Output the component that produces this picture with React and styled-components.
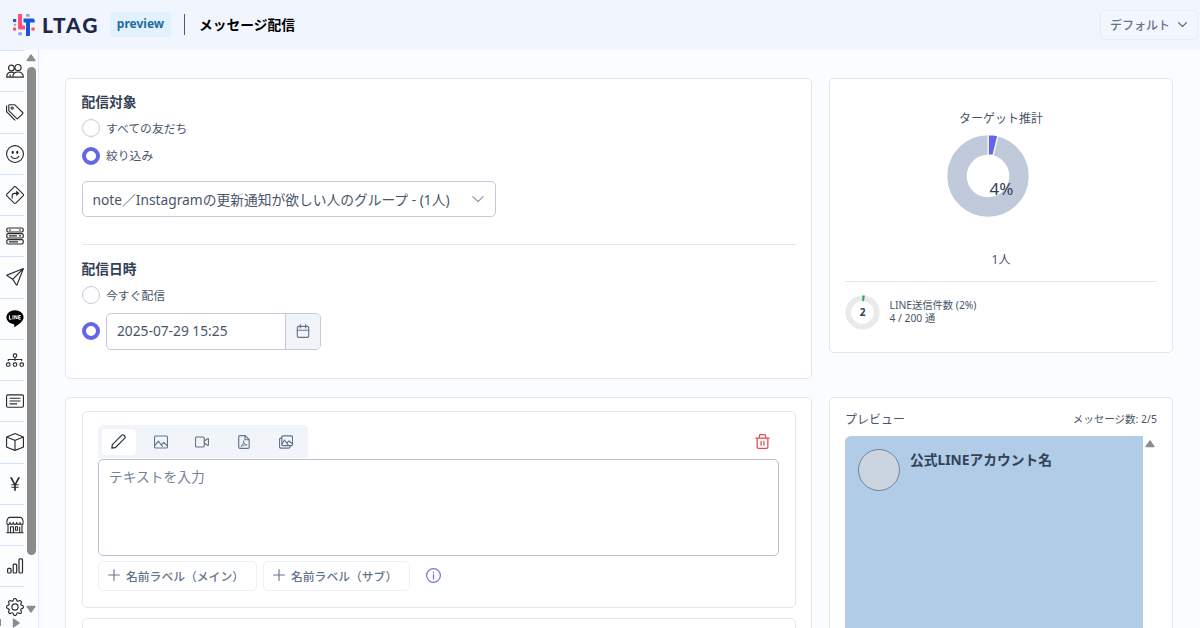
import React, { useState } from 'react'
import styled, { createGlobalStyle } from 'styled-components'
import {
    BsTags, BsEmojiSmile, BsSignTurnRight, BsSend,
    BsDiagram3, BsCardText, BsBox, BsCurrencyYen, BsGear,
} from 'react-icons/bs'

const GlobalStyle = createGlobalStyle`
    *{
        box-sizing:border-box;
    }
    body{
        margin:0;
        overflow:hidden;
        background:#fbfcff;
        color:#334155;
        font-family:"Noto Sans", "Noto Sans CJK JP", sans-serif;
        font-size:12px;
    }
    button, textarea, input{
        font-family:inherit;
        color:inherit;
    }
    svg{
        display:block;
        flex-shrink:0;
    }
`

/* ---------- icons ---------- */

const Stroke = ({ size = 14, children, width = 1.15 }) => (
    <svg width={size} height={size} viewBox="0 0 14 14" fill="none" stroke="currentColor"
        strokeWidth={width} strokeLinecap="round" strokeLinejoin="round">{children}</svg>
)

const PeopleIcon = () => (
    <svg width="18" height="18" viewBox="0 0 18 18" fill="none" stroke="currentColor" strokeWidth="1.2" strokeLinejoin="round">
        <circle cx="5.4" cy="6" r="2.9" />
        <circle cx="12" cy="5.6" r="3.1" />
        <path d="M6.800 15.200c0-3.500 2.200-5.200 5.300-5.200s5.200 1.700 5.200 5.200zM6.800 15.200H.7c0-3.400 1.900-5 4.700-5q1.700 0 2.800.7M4.200 15v-2.600" />
    </svg>
)

const ServerIcon = () => (
    <svg width="18" height="18" viewBox="0 0 18 18" fill="none" stroke="currentColor" strokeWidth="1.2">
        <rect x="0.8" y="1" width="16.4" height="4" rx="1.4" />
        <rect x="0.8" y="6.6" width="16.4" height="4.4" rx="1.2" />
        <rect x="0.8" y="12.6" width="16.4" height="4.4" rx="1.4" />
        <path d="M3 3h2M13 3h2M3 8.8h8M13 8.8h2M3 14.8h9" />
    </svg>
)

const ShopIcon = () => (
    <svg width="18" height="18" viewBox="0 0 18 18" fill="none" stroke="currentColor" strokeWidth="1.1" strokeLinejoin="round">
        <path d="M.8 6.400C1 4 2.200 1.400 4 1.400h10c1.800 0 3 2.600 3.200 5" />
        <path d="M.7 6.400c0 2.600 3.300 2.600 3.300 0 0 2.600 3.300 2.600 3.300 0 0 2.600 3.400 2.600 3.400 0 0 2.600 3.300 2.600 3.300 0 0 2.600 3.300 2.600 3.300 0" />
        <path d="M2 8.500v8M16 8.500v8M.4 16.700h17.200M4.500 16.500v-5.700h2.900v5.700M9.400 10.800h2.100v3.400H9.400zM13.700 16.500v-5.700" />
    </svg>
)

const BarsIcon = () => (
    <svg width="18" height="18" viewBox="0 0 18 18" fill="none" stroke="currentColor" strokeWidth="1.2">
        <rect x="1.6" y="11.4" width="3.4" height="4.6" rx=".9" />
        <rect x="7.2" y="7.2" width="3.5" height="8.8" rx=".9" />
        <rect x="13" y="1.8" width="3.5" height="14.2" rx=".9" />
    </svg>
)

const LineIcon = () => (
    <svg width="18" height="18" viewBox="0 0 18 18">
        <path fill="#000" d="M9 .3C4.300.3.4 3.400.4 7.300c0 3.500 3.100 6.400 7.300 6.900.9.200.7.800.5 2.400 0 .5.3.5.9.2 1.400-.8 8.500-5 8.500-9.500C17.600 3.400 13.700.3 9 .3z" />
        <path d="M3.400 5.400v3.800h2.100M7 5.200v4.200M8.800 9.300V5.400l2.200 3.600V5.200M14.700 5.500h-2v3.700h2M12.700 7.300h1.800" fill="none" stroke="#fff" strokeWidth="1" />
    </svg>
)

const PencilIcon = () => (
    <Stroke size={15} width={1.200}><path d="M.8 13.200l.5-3.300L9.900 1.300a1.600 1.600 0 0 1 2.300 0l.5.500a1.600 1.600 0 0 1 0 2.300L4.200 12.600z" /></Stroke>
)

const ImageIcon = () => (
    <Stroke>
        <rect x=".5" y="1" width="13" height="12" rx="1.300" />
        <path d="M.8 10.600l3.500-4.400 4.200 5.300M7.200 9.800l2.600-2.300 3.500 3.400" />
    </Stroke>
)

const VideoIcon = () => (
    <Stroke>
        <rect x=".5" y="2" width="8.800" height="10" rx="1.200" />
        <path d="M9.300 6l3.300-2.300q.9-.4.900.5v5.600q0 .9-.9.500L9.300 8" />
    </Stroke>
)

const PdfIcon = () => (
    <Stroke>
        <path d="M3 .6h5.200l4 4v7.500a1.300 1.300 0 0 1-1.300 1.300H3a1.300 1.300 0 0 1-1.300-1.300V1.900A1.300 1.300 0 0 1 3 .6zM8 .8v3.900h4" />
        <path d="M4 11.300c2-1 3-3.800 2.600-5.500M6.600 6.800c.3 1.800 1.700 3 3.500 3.100-2 0-3.800.3-5.500 1.100" strokeWidth=".9" />
    </Stroke>
)

const ImagesIcon = () => (
    <Stroke>
        <rect x="2.800" y=".8" width="10.700" height="9.800" rx="1.200" />
        <path d="M2.800 2.800l-1.500.6q-.8.200-.8 1v7q0 1.700 1.700 1.700h7.600q1.400 0 1.600-2.300M3 9l2.500-4 3.500 4.800M8 7.800l2-1.800 3.300 2.800" />
    </Stroke>
)

const TrashIcon = () => (
    <Stroke size={15} width={1.150}>
        <path d="M.8 3.800h12.400M2 3.800v8.300a1.300 1.300 0 0 0 1.300 1.300h7.400a1.300 1.300 0 0 0 1.300-1.300V3.800M4 3.600V1.900A1.300 1.300 0 0 1 5.300.6h3.400A1.300 1.300 0 0 1 10 1.900v1.700M5.700 6.800v3.700M8.300 6.800v3.700" />
    </Stroke>
)

const CalendarIcon = () => (
    <Stroke>
        <rect x="1.300" y="2.300" width="11.400" height="11" rx="1.300" />
        <path d="M1.300 6.200h11.400M4.300.6v3.300M9.700.6v3.300" />
    </Stroke>
)

const PlusIcon = () => (
    <Stroke size={12} width={1.300}><path d="M7 .7v12.600M.7 7h12.600" /></Stroke>
)

const InfoIcon = () => (
    <Stroke size={15}><circle cx="7" cy="7" r="6.400" /><path d="M7 6.300v3.900M7 3.900v.3" strokeWidth="1.200" /></Stroke>
)

const ChevronIcon = ({ size = 12, width = 1.400 }) => (
    <Stroke size={size} width={width}><path d="M1 4.200l6 5.800 6-5.800" /></Stroke>
)

const LogoMark = () => (
    <svg width="22" height="24" viewBox="0 0 22 24">
        <g fill="#ff4f78">
            <path d="M5 1h4v11.600h3V16.500H6.500Q5 16.500 5 15z" />
            <rect x="0" y="14.500" width="3.200" height="3" rx=".6" />
            <rect x="18.400" y="14.500" width="3.300" height="3" rx=".6" />
        </g>
        <g fill="#1457d9">
            <path d="M10.500 5.500h9.500q1.700 0 1.700 1.700V9.500H17V22q0 1-1 1h-3V9.500h-2.500z" />
            <rect x="0" y="6" width="3.200" height="3" rx=".6" />
        </g>
        <g fill="#93a5cf">
            <rect x="13" y="1" width="3.600" height="2.800" rx=".6" />
            <rect x=".8" y="10.800" width="2.400" height="2" rx=".5" />
            <rect x="5.400" y="19.200" width="3.600" height="3" rx=".6" />
        </g>
    </svg>
)

const Arrow = ({ dir, color = '#8c8c8c' }) => (
    <ArrowSvg $dir={dir} width="10" height="8" viewBox="0 0 10 8">
        <path d="M5 .8L9 6.600H1z" fill={color} stroke={color} strokeWidth="1.200" strokeLinejoin="round" />
    </ArrowSvg>
)

const menuItems = [
    PeopleIcon, BsTags, BsEmojiSmile, BsSignTurnRight, ServerIcon, BsSend, LineIcon,
    BsDiagram3, BsCardText, BsBox, BsCurrencyYen, ShopIcon, BarsIcon, BsGear,
]

const tabs = [PencilIcon, ImageIcon, VideoIcon, PdfIcon, ImagesIcon]

function Header() {
    return (
        <HeaderBar>
            <LogoMark />
            <LogoText>LTAG</LogoText>
            <Tag>preview</Tag>
            <HeaderLine />
            <PageTitle>メッセージ配信</PageTitle>
            <AccountSelect>
                <span>デフォルト</span>
                <ChevronIcon size={9} width={2} />
            </AccountSelect>
        </HeaderBar>
    )
}

function Sidebar() {
    return (
        <SideWrap>
            <SideTop>
                <SideMenu>
                    {menuItems.map((Icon, index) => (
                        <SideItem key={index}><Icon size={18} /></SideItem>
                    ))}
                </SideMenu>
                <SideScroll>
                    <Arrow />
                    <Thumb />
                    <Arrow dir="down" />
                </SideScroll>
            </SideTop>
            <SideBottom>
                <HThumb />
                <Arrow dir="right" />
            </SideBottom>
        </SideWrap>
    )
}

function TargetCard() {
    const [target, setTarget] = useState('filter')
    const [timing, setTiming] = useState('date')
    return (
        <SettingCard>
            <Heading>配信対象</Heading>
            <RadioRow $top={7} onClick={() => setTarget('all')}>
                <Radio $on={target === 'all'} /><RadioText>すべての友だち</RadioText>
            </RadioRow>
            <RadioRow $top={9.5} onClick={() => setTarget('filter')}>
                <Radio $on={target === 'filter'} /><RadioText>絞り込み</RadioText>
            </RadioRow>
            <GroupSelect>
                <span>note／Instagramの更新通知が欲しい人のグループ - (1人)</span>
                <ChevronIcon />
            </GroupSelect>
            <Divider $top={27} $bottom={14} />
            <Heading>配信日時</Heading>
            <RadioRow $top={7} onClick={() => setTiming('now')}>
                <Radio $on={timing === 'now'} /><RadioText>今すぐ配信</RadioText>
            </RadioRow>
            <DateRow onClick={() => setTiming('date')}>
                <Radio $on={timing === 'date'} />
                <DateField>
                    <DateValue>2025-07-29 15:25</DateValue>
                    <DateButton><CalendarIcon /></DateButton>
                </DateField>
            </DateRow>
        </SettingCard>
    )
}

function EstimateCard() {
    return (
        <Estimate>
            <EstimateTitle>ターゲット推計</EstimateTitle>
            <svg width="112" height="84" viewBox="-56 -42 112 84">
                <circle r="31" fill="none" stroke="#c0cada" strokeWidth="19.500" />
                <path d="M.2 -41.500A41.500 41.500 0 0 1 9.900 -40.300L5.100 -20.500A21.200 21.200 0 0 0 .2 -21z"
                    fill="#6366e8" stroke="#fff" strokeWidth="1.300" />
                <text x="1.500" y="19" fontSize="17" fill="#334155">4%</text>
            </svg>
            <People>1人</People>
            <Divider $top={12} $bottom={13} />
            <Usage>
                <svg width="35" height="35" viewBox="-17.500 -17.500 35 35">
                    <circle r="14.250" fill="none" stroke="#e9eaec" strokeWidth="5.700" />
                    <path d="M-.2 -14.250A14.250 14.250 0 0 1 1.900 -14.100" fill="none" stroke="#2fa558" strokeWidth="5.700" />
                    <text y="3.600" fontSize="10" fontWeight="700" textAnchor="middle" fill="#334155">2</text>
                </svg>
                <UsageText>
                    <div>LINE送信件数 (2%)</div>
                    <div>4 / 200 通</div>
                </UsageText>
            </Usage>
        </Estimate>
    )
}

function MessageCard() {
    const [active, setActive] = useState(0)
    return (
        <MessageList>
            <Panel>
                <ToolRow>
                    <Tabs>
                        {tabs.map((Icon, index) => (
                            <Tab key={index} $active={index === active} onClick={() => setActive(index)}><Icon /></Tab>
                        ))}
                    </Tabs>
                    <DeleteButton><TrashIcon /></DeleteButton>
                </ToolRow>
                <TextInput placeholder="テキストを入力" />
                <LabelRow>
                    <LabelButton $width={159}><PlusIcon />名前ラベル（メイン）</LabelButton>
                    <LabelButton $width={147}><PlusIcon />名前ラベル（サブ）</LabelButton>
                    <Info><InfoIcon /></Info>
                </LabelRow>
            </Panel>
            <Panel />
        </MessageList>
    )
}

function Preview() {
    return (
        <PreviewCard>
            <PreviewHead>
                <span>プレビュー</span>
                <Count>メッセージ数: 2/5</Count>
            </PreviewHead>
            <PreviewBody>
                <Talk>
                    <Avatar />
                    <AccountName>公式LINEアカウント名</AccountName>
                </Talk>
                <TalkScroll><Arrow /></TalkScroll>
            </PreviewBody>
        </PreviewCard>
    )
}

export default function App() {
    return (
        <Page>
            <GlobalStyle />
            <Header />
            <Body>
                <Sidebar />
                <Content>
                    <TargetCard />
                    <EstimateCard />
                    <MessageCard />
                    <Preview />
                </Content>
            </Body>
        </Page>
    )
}

const Page = styled.div`
    height:628px;
    width:1200px;
    overflow:hidden;
    display:flex;
    flex-direction:column;
`

const HeaderBar = styled.header`
    height:50px;
    flex-shrink:0;
    display:flex;
    align-items:center;
    padding:0 2px 1px 13px;
    background:#f1f6fe;
`
const LogoText = styled.div`
    width:58px;
    margin-left:7px;
    font-family:Lato, sans-serif;
    font-size:21px;
    font-weight:900;
    line-height:24px;
    letter-spacing:1.9px;
    color:#23264a;
`
const Tag = styled.div`
    width:61px;
    height:25px;
    margin-left:10px;
    border-radius:4px;
    background:#e2f1fe;
    color:#1d6d9e;
    font-weight:700;
    line-height:24px;
    text-align:center;
`
const HeaderLine = styled.div`
    width:1px;
    height:21px;
    margin:0 14px 0 13px;
    background:#555b63;
`
const PageTitle = styled.h1`
    margin:0;
    font-size:13.75px;
    font-weight:700;
    line-height:20px;
    color:#000;
`
const AccountSelect = styled.button`
    width:98px;
    height:30px;
    margin-left:auto;
    padding:0 10px 0 9px;
    display:flex;
    align-items:center;
    justify-content:space-between;
    border:1px solid #e6edf5;
    border-radius:5px;
    background:#f3f7fd;
    color:#64748b;
    font-size:12px;
    font-weight:500;
`

const Body = styled.div`
    flex:1;
    min-height:0;
    display:flex;
`
const SideWrap = styled.nav`
    width:39px;
    flex-shrink:0;
    display:flex;
    flex-direction:column;
    border-right:1px solid #dbeafe;
    background:#fcfdff;
`
const SideTop = styled.div`
    height:567px;
    display:flex;
`
const SideMenu = styled.div`
    width:24px;
    overflow:hidden;
`
const SideItem = styled.div`
    height:41.250px;
    padding:0 0 0 6px;
    display:flex;
    align-items:center;
    border-top:1px solid #d3e2fb;
    color:#2b2b2b;
`
const SideScroll = styled.div`
    width:14px;
    padding:4px 0 4px;
    display:flex;
    flex-direction:column;
    align-items:center;
    justify-content:space-between;
`
const Thumb = styled.div`
    width:9px;
    height:488px;
    margin-bottom:46px;
    border-radius:5px;
    background:#8b8b8b;
`
const SideBottom = styled.div`
    height:14px;
    display:flex;
    align-items:center;
    gap:10px;
`
const HThumb = styled.div`
    width:1px;
    height:7px;
    background:#8b8b8b;
`
const ArrowSvg = styled.svg`
    transform:rotate(${props => props.$dir === 'down' ? '180deg' : props.$dir === 'right' ? '90deg' : '0deg'});
`

const Content = styled.main`
    display:grid;
    grid-template-columns:747px 344px;
    grid-template-rows:301px 240px;
    column-gap:17px;
    row-gap:17.500px;
    padding:28px 0 0 26px;
`
const Card = styled.section`
    border:1px solid #e2e6ec;
    border-radius:5px;
    background:#fff;
`
const SettingCard = styled(Card)`
    padding:13px 15px 0 15.500px;
`
const Heading = styled.h2`
    margin:0;
    font-size:13.750px;
    font-weight:700;
    line-height:20px;
`
const RadioRow = styled.div`
    height:18px;
    margin-top:${props => props.$top}px;
    display:flex;
    align-items:center;
    gap:6.500px;
    font-size:11.800px;
    color:#475569;
`
const RadioText = styled.span`
    padding-bottom:2px;
`
const Radio = styled.span`
    width:18px;
    height:18px;
    flex-shrink:0;
    border-radius:50%;
    border:${props => props.$on ? '4px solid #6366e8' : '1px solid #c5ccd8'};
    background:#fff;
`
const GroupSelect = styled.div`
    width:414px;
    height:36.500px;
    margin-top:16px;
    padding:0 11px 0 10px;
    display:flex;
    align-items:center;
    justify-content:space-between;
    border:1px solid #c4cad9;
    border-radius:5px;
    font-size:13.750px;
    white-space:nowrap;
    color:#475569;
    svg{
        color:#8794b0;
    }
`
const Divider = styled.div`
    height:1px;
    align-self:stretch;
    margin:${props => props.$top}px 0 ${props => props.$bottom}px;
    background:#e5e7eb;
`
const DateRow = styled.div`
    margin-top:9px;
    display:flex;
    align-items:center;
    gap:6.500px;
`
const DateField = styled.div`
    width:215px;
    height:36.500px;
    display:flex;
    border:1px solid #c4cad9;
    border-radius:5px;
    overflow:hidden;
`
const DateValue = styled.div`
    flex:1;
    padding-left:10px;
    font-size:13.750px;
    line-height:34px;
    color:#475569;
`
const DateButton = styled.div`
    width:35px;
    display:flex;
    align-items:center;
    justify-content:center;
    border-left:1px solid #c4cad9;
    background:#f1f5f9;
    color:#64748b;
`

const Estimate = styled(Card)`
    height:275px;
    padding:30.500px 15px 0;
    display:flex;
    flex-direction:column;
    align-items:center;
    color:#475569;
    > svg{
        margin:6px 26px 0 0;
    }
`
const EstimateTitle = styled.div`
    line-height:18px;
`
const People = styled.div`
    margin-top:33px;
    line-height:18px;
`
const Usage = styled.div`
    align-self:stretch;
    display:flex;
    align-items:center;
    gap:9.500px;
`
const UsageText = styled.div`
    font-size:10.300px;
    line-height:13.500px;
`

const MessageList = styled(Card)`
    padding:13px 15px 0 15.500px;
    display:flex;
    flex-direction:column;
    gap:10px;
`
const Panel = styled.div`
    height:197px;
    flex-shrink:0;
    padding:13.500px 16px 0 15px;
    border:1px solid #e5e8ed;
    border-radius:5px;
`
const ToolRow = styled.div`
    height:33.500px;
    display:flex;
    align-items:center;
    justify-content:space-between;
`
const Tabs = styled.div`
    width:210px;
    height:33px;
    padding:0 4px;
    display:flex;
    align-items:center;
    gap:7px;
    border-radius:5px 5px 0 0;
    background:#f1f5f9;
`
const Tab = styled.div`
    width:35px;
    height:26px;
    display:flex;
    align-items:center;
    justify-content:center;
    border-radius:4px;
    background:${props => props.$active ? '#fff' : 'transparent'};
    color:${props => props.$active ? '#333a45' : '#64748b'};
`
const DeleteButton = styled.div`
    margin-right:9px;
    color:#e5484d;
`
const TextInput = styled.textarea`
    display:block;
    width:681.500px;
    height:97px;
    padding:7.500px 10.500px;
    resize:none;
    outline:none;
    border:1px solid #b9c2d0;
    border-radius:5px;
    background:#fff;
    font-size:13.750px;
    line-height:20px;
    &::placeholder{
        color:#75839a;
    }
`
const LabelRow = styled.div`
    margin-top:5px;
    display:flex;
    align-items:center;
    gap:6px;
`
const LabelButton = styled.button`
    width:${props => props.$width}px;
    height:30px;
    padding:0 0 1px 9px;
    display:flex;
    align-items:center;
    gap:6.500px;
    border:1px solid #eef1f5;
    border-radius:5px;
    background:#fff;
    color:#64748b;
    font-size:11.800px;
    font-weight:500;
    white-space:nowrap;
`
const Info = styled.div`
    margin-left:10px;
    color:#7375e8;
`

const PreviewCard = styled(Card)`
    padding:13px 15px 0;
    color:#475569;
`
const PreviewHead = styled.div`
    height:25px;
    display:flex;
    justify-content:space-between;
    line-height:18px;
`
const Count = styled.span`
    font-size:10.500px;
    line-height:17px;
`
const PreviewBody = styled.div`
    height:200px;
    display:flex;
`
const Talk = styled.div`
    flex:1;
    padding:13px;
    display:flex;
    gap:10px;
    border-radius:6px 0 0 0;
    background:#b0cce7;
`
const Avatar = styled.div`
    width:42px;
    height:42px;
    border:1px solid #75839a;
    border-radius:50%;
    background:#cbd5e1;
`
const AccountName = styled.div`
    font-size:13.750px;
    font-weight:700;
    line-height:21px;
    color:#334155;
`
const TalkScroll = styled.div`
    width:14.500px;
    padding-top:4px;
    display:flex;
    justify-content:center;
`
